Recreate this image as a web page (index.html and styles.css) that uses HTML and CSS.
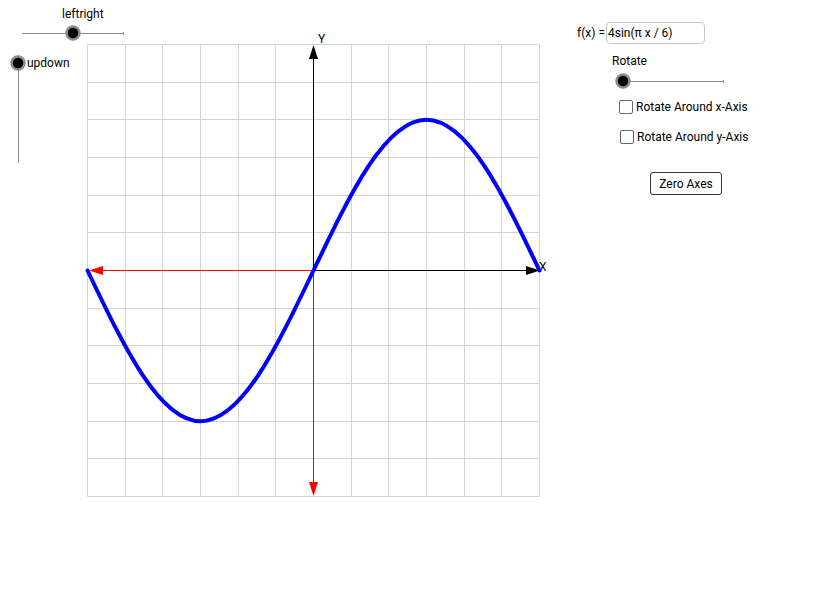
FILE: index.html
```html
<!DOCTYPE html>
<html>
<head>
    <title>Rotate Function</title>
    <link rel="stylesheet" href="styles.css">
</head>
<body>

    <div class="applet">
        <!-- canvas: sliders, grid, axes, curve -->
        <svg class="canvas" width="560" height="520" viewBox="0 0 560 520">
            <!-- grid -->
            <g class="grid">
                <line x1="87.5" y1="44.5" x2="87.5" y2="496.5"/>
                <line x1="125.5" y1="44.5" x2="125.5" y2="496.5"/>
                <line x1="162.5" y1="44.5" x2="162.5" y2="496.5"/>
                <line x1="200.5" y1="44.5" x2="200.5" y2="496.5"/>
                <line x1="238.5" y1="44.5" x2="238.5" y2="496.5"/>
                <line x1="275.5" y1="44.5" x2="275.5" y2="496.5"/>
                <line x1="351.5" y1="44.5" x2="351.5" y2="496.5"/>
                <line x1="388.5" y1="44.5" x2="388.5" y2="496.5"/>
                <line x1="426.5" y1="44.5" x2="426.5" y2="496.5"/>
                <line x1="464.5" y1="44.5" x2="464.5" y2="496.5"/>
                <line x1="501.5" y1="44.5" x2="501.5" y2="496.5"/>
                <line x1="539.5" y1="44.5" x2="539.5" y2="496.5"/>
                <line x1="87.5" y1="44.5" x2="539.5" y2="44.5"/>
                <line x1="87.5" y1="82.5" x2="539.5" y2="82.5"/>
                <line x1="87.5" y1="119.5" x2="539.5" y2="119.5"/>
                <line x1="87.5" y1="157.5" x2="539.5" y2="157.5"/>
                <line x1="87.5" y1="195.5" x2="539.5" y2="195.5"/>
                <line x1="87.5" y1="232.5" x2="539.5" y2="232.5"/>
                <line x1="87.5" y1="308.5" x2="539.5" y2="308.5"/>
                <line x1="87.5" y1="345.5" x2="539.5" y2="345.5"/>
                <line x1="87.5" y1="383.5" x2="539.5" y2="383.5"/>
                <line x1="87.5" y1="421.5" x2="539.5" y2="421.5"/>
                <line x1="87.5" y1="458.5" x2="539.5" y2="458.5"/>
                <line x1="87.5" y1="496.5" x2="539.5" y2="496.5"/>
            </g>

            <!-- axes -->
            <line class="axis" x1="313.5" y1="270.5" x2="528" y2="270.5"/>
            <polygon class="axis-head" points="540,270.5 526,266 526,275"/>
            <line class="axis" x1="313.5" y1="270.5" x2="313.5" y2="57"/>
            <polygon class="axis-head" points="313.5,45 309,59 318,59"/>
            <line class="axis-neg" x1="313.5" y1="270.5" x2="101" y2="270.5"/>
            <polygon class="axis-neg-head" points="89,270.5 103,266 103,275"/>
            <line class="axis-neg" x1="313.5" y1="270.5" x2="313.5" y2="484"/>
            <polygon class="axis-neg-head" points="313.5,496 309,482 318,482"/>
            <text class="axis-label" x="318" y="43">Y</text>
            <text class="axis-label" x="539" y="271">X</text>

            <!-- f(x) = 4sin(pi x / 6) -->
            <path class="curve" d="M87.5,270.5 C124.35,347.69 159.61,421.17 200.5,421.17 C241.4,421.17 276.65,347.69 313.5,270.5 C350.35,193.31 385.61,119.83 426.5,119.83 C467.4,119.83 502.65,193.31 539.5,270.5"/>

            <!-- slider leftright -->
            <text class="slider-label" x="62" y="18">leftright</text>
            <line class="track" x1="22" y1="33.5" x2="124" y2="33.5"/>
            <line class="track" x1="123.5" y1="32" x2="123.5" y2="35"/>
            <circle class="knob" cx="73" cy="33" r="6.5"/>

            <!-- slider updown -->
            <line class="track" x1="18.5" y1="63" x2="18.5" y2="163"/>
            <circle class="knob" cx="18" cy="63" r="6.5"/>
            <text class="slider-label" x="27" y="67">updown</text>
        </svg>

        <div class="panel">
            <div class="fx-row">
                <span>f(x) =</span>
                <div class="fx-input">4sin(π x / 6)</div>
            </div>

            <div class="rotate-label">Rotate</div>
            <svg class="rotate-slider" width="112" height="20" viewBox="0 0 112 20">
                <line class="track" x1="8" y1="9.5" x2="109" y2="9.5"/>
                <line class="track" x1="108.5" y1="8" x2="108.5" y2="11"/>
                <circle class="knob" cx="8" cy="9" r="6.5"/>
            </svg>

            <div class="check-row first">
                <span class="box"></span>
                <span>Rotate Around x-Axis</span>
            </div>
            <div class="check-row second">
                <span class="box"></span>
                <span>Rotate Around y-Axis</span>
            </div>

            <button class="zero-btn">Zero Axes</button>
        </div>
    </div>

</body>
</html>
```

FILE: styles.css
```css
body {
    margin: 0;
    background-color: #fff;
    color: #000;
    font-family: Roboto, 'Liberation Sans', sans-serif;
    font-size: 12px;
}

.applet {
    display: flex;
    align-items: flex-start;
    width: 822px;
    height: 600px;
}

.canvas {
    display: block;
    flex: none;
}

.grid line {
    stroke: #d3d3d3;
    stroke-width: 1;
}

.axis {
    stroke: #000;
    stroke-width: 1;
}

.axis-head {
    fill: #000;
}

.axis-neg {
    stroke: #ff0000;
    stroke-width: 1;
}

.axis-neg-head {
    fill: #ff0000;
}

.axis-label,
.slider-label {
    font-family: Roboto, 'Liberation Sans', sans-serif;
    font-size: 12px;
    fill: #000;
}

.curve {
    fill: none;
    stroke: #0000ff;
    stroke-width: 4;
    stroke-linecap: round;
}

.track {
    stroke: #8c8c8c;
    stroke-width: 1;
}

.knob {
    fill: #000;
    stroke: #8c8c8c;
    stroke-width: 2.5;
}

.panel {
    padding: 22px 0 0 17px;
}

.fx-row {
    display: flex;
    align-items: center;
    gap: 1px;
    height: 22px;
}

.fx-input {
    width: 96px;
    height: 20px;
    line-height: 20px;
    padding-left: 1px;
    border: 1px solid #c8c8c8;
    border-radius: 4px;
}

.rotate-label {
    margin: 10px 0 0 35px;
    line-height: 14px;
}

.rotate-slider {
    display: block;
    margin: 4px 0 0 38px;
}

.check-row {
    display: flex;
    align-items: center;
    gap: 3px;
    line-height: 14px;
}

.check-row.first {
    margin: 8px 0 0 42px;
}

.check-row.second {
    margin: 16px 0 0 43px;
}

.box {
    width: 12px;
    height: 12px;
    border: 1px solid #666;
    border-radius: 2px;
    background: #fff;
}

.zero-btn {
    display: block;
    margin: 28px 0 0 73px;
    width: 72px;
    height: 23px;
    padding: 0;
    background: #fff;
    border: 1px solid #333;
    border-radius: 3px;
    font-family: Roboto, 'Liberation Sans', sans-serif;
    font-size: 12px;
    color: #000;
}
```
